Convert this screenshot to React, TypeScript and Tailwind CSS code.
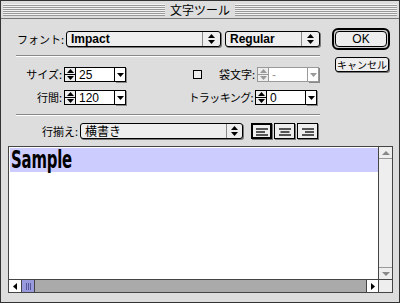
import type { ReactNode } from 'react'

const jp = "font-['Noto_Sans_CJK_JP',sans-serif]"
const latin = "font-['Liberation_Sans','Noto_Sans_CJK_JP',sans-serif]"

function Stepper({ disabled }: { disabled?: boolean }) {
  const c = disabled ? '#999' : '#000'
  return (
    <div className={`w-[12px] h-[15px] border ${disabled ? 'border-[#999]' : 'border-black'} bg-[#eee] flex flex-col`}>
      <div className={`flex-1 flex items-center justify-center border-b ${disabled ? 'border-[#999]' : 'border-black'}`}>
        <svg width="7" height="4" viewBox="0 0 7 4"><path d="M0 4 L3.5 0 L7 4 Z" fill={c} /></svg>
      </div>
      <div className="flex-1 flex items-center justify-center">
        <svg width="7" height="4" viewBox="0 0 7 4"><path d="M0 0 L3.5 4 L7 0 Z" fill={c} /></svg>
      </div>
    </div>
  )
}

function SpinField({ value, fieldW, disabled }: { value: string; fieldW: string; disabled?: boolean }) {
  const bc = disabled ? 'border-[#999]' : 'border-black'
  return (
    <div className="flex items-center">
      <Stepper disabled={disabled} />
      <div className={`h-[15px] ${fieldW} border border-l-0 ${bc} bg-white flex items-center pl-[3px] text-[12px] leading-none ${latin} ${disabled ? 'text-[#999]' : 'text-black'}`}>
        {value}
      </div>
      <div className={`w-[11px] h-[15px] border border-l-0 ${bc} bg-white flex items-center justify-center shadow-[1px_1px_0_#888]`}>
        <svg width="7" height="4" viewBox="0 0 7 4"><path d="M0 0 L3.5 4 L7 0 Z" fill={disabled ? '#999' : '#000'} /></svg>
      </div>
    </div>
  )
}

function Popup({ label, w, bold, arrowW = 'w-[17px]' }: { label: string; w: string; bold?: boolean; arrowW?: string }) {
  return (
    <div className={`${w} h-[16px] border border-black rounded-[3px] bg-[#eee] shadow-[1px_1px_0_#777] flex items-stretch`}>
      <div className={`flex-1 flex items-center pl-[4px] text-[12px] leading-none ${bold ? `font-bold ${latin}` : jp}`}>{label}</div>
      <div className={`${arrowW} border-l border-[#888] flex items-center justify-center`}>
        <svg width="7" height="10" viewBox="0 0 7 10">
          <path d="M0 4 L3.5 0 L7 4 Z M0 6 L3.5 10 L7 6 Z" fill="#000" />
        </svg>
      </div>
    </div>
  )
}

function Sep() {
  return <div className="h-[2px] w-[304px] border-t border-[#888] border-b border-b-white" />
}

function Label({ children, w }: { children: ReactNode; w: string }) {
  return (
    <div className={`${w} shrink-0 flex items-center justify-end whitespace-nowrap text-[11px] leading-none pr-[2px] ${jp}`}>
      {children}
    </div>
  )
}

function AlignBtn({ kind, active }: { kind: 'l' | 'c' | 'r'; active?: boolean }) {
  const lines = [
    { y: 3, w: 12 },
    { y: 6, w: 9 },
    { y: 9, w: 12 },
  ]
  return (
    <div className={`w-[21px] h-[16px] ${active ? 'border-2' : 'border'} border-black bg-[#eee] shadow-[1px_1px_0_#777] flex items-center justify-center`}>
      <svg width="14" height="12" viewBox="0 0 14 12">
        {lines.map((l, i) => {
          const x = kind === 'l' ? 1 : kind === 'r' ? 13 - l.w : (14 - l.w) / 2
          return <rect key={i} x={x} y={l.y} width={l.w} height="2" fill="#555" />
        })}
      </svg>
    </div>
  )
}

export default function App() {
  return (
    <div className="w-[400px] h-[303px] bg-[#dddddd] border border-[#333] flex flex-col text-black">
      {/* title bar */}
      <div className="h-[18px] bg-[#dddddd] border-b border-[#777] flex items-center px-[2px] gap-0">
        <div className="flex-1 h-[12px] bg-[repeating-linear-gradient(to_bottom,#f2f2f2_0px,#f2f2f2_1px,#999_1px,#999_2px)]" />
        <div className={`px-[5px] text-[12px] leading-none ${jp}`}>文字ツール</div>
        <div className="flex-1 h-[12px] bg-[repeating-linear-gradient(to_bottom,#f2f2f2_0px,#f2f2f2_1px,#999_1px,#999_2px)]" />
      </div>

      <div className="flex-1 flex flex-col pl-[7px] pr-[6px]">
        <div className="flex pt-[9px] pl-[8px]">
          {/* left controls */}
          <div className="w-[305px] pt-[3px] flex flex-col">
            <div className="flex items-center h-[16px]">
              <Label w="w-[50px]">フォント:</Label>
              <Popup label="Impact" w="w-[155px]" bold arrowW="w-[18px]" />
              <div className="w-[4px]" />
              <Popup label="Regular" w="w-[95px]" bold arrowW="w-[18px]" />
            </div>
            <div className="mt-[8px]"><Sep /></div>

            <div className="flex items-center h-[15px] mt-[10px]">
              <Label w="w-[48px]">サイズ:</Label>
              <SpinField value="25" fieldW="w-[39px]" />
              <div className="w-[60px]" />
              <div className="w-[71px] shrink-0 flex items-center">
                <div className="ml-[7px] w-[9px] h-[9px] border border-black bg-[#eee]" />
                <div className="flex-1 flex justify-end"><Label w="w-auto">袋文字:</Label></div>
              </div>
              <SpinField value="-" fieldW="w-[39px]" disabled />
            </div>

            <div className="flex items-center h-[15px] mt-[8px]">
              <Label w="w-[48px]">行間:</Label>
              <SpinField value="120" fieldW="w-[39px]" />
              <div className="w-[60px] shrink-0" />
              <Label w="w-[69px]"><span className="tracking-[-0.6px]">トラッキング:</span></Label>
              <SpinField value="0" fieldW="w-[39px]" />
            </div>
            <div className="mt-[9px]"><Sep /></div>

            <div className="flex items-center h-[16px] mt-[7px]">
              <Label w="w-[64px]">行揃え:</Label>
              <Popup label="横書き" w="w-[163px]" arrowW="w-[16px]" />
              <div className="w-[8px]" />
              <div className="flex gap-[2px]">
                <AlignBtn kind="l" active />
                <AlignBtn kind="c" />
                <AlignBtn kind="r" />
              </div>
            </div>
          </div>

          {/* right buttons */}
          <div className="ml-[11px] flex flex-col items-start">
            <div className="w-[58px] h-[22px] border-2 border-black rounded-[6px] p-[1px] bg-[#ccc]">
              <div className={`h-full border border-black rounded-[4px] bg-[#eee] flex items-center justify-center text-[12px] leading-none ${latin}`}>OK</div>
            </div>
            <div className={`mt-[7px] ml-[3px] w-[54px] h-[15px] border border-black rounded-[3px] bg-[#eee] shadow-[1px_1px_0_#777] flex items-center justify-center whitespace-nowrap text-[10px] leading-none ${jp}`}>
              キャンセル
            </div>
          </div>
        </div>

        {/* text area */}
        <div className="mt-[7px] h-[147px] border border-[#444] bg-white flex flex-col">
          <div className="flex-1 flex min-h-0">
            <div className="flex-1 pt-[1px] pl-[1px]">
              <div className="h-[24px] bg-[#ccccff] flex items-center pl-[1px]">
                <span className="inline-block origin-left scale-x-[0.62] font-['DejaVu_Sans',sans-serif] font-bold text-[24px] leading-[22px] tracking-[-0.3px]">Sample</span>
              </div>
            </div>
            <div className="w-[14px] border-l border-[#444] bg-[#eeeeee] flex flex-col justify-between">
              <div className="h-[12px] border-b border-[#999] flex items-center justify-center">
                <svg width="8" height="4" viewBox="0 0 8 4"><path d="M0 4 L4 0 L8 4 Z" fill="#888" /></svg>
              </div>
              <div className="h-[12px] border-t border-[#999] flex items-center justify-center">
                <svg width="8" height="4" viewBox="0 0 8 4"><path d="M0 0 L4 4 L8 0 Z" fill="#888" /></svg>
              </div>
            </div>
          </div>
          <div className="h-[13px] border-t border-[#444] flex">
            <div className="w-[13px] bg-white border-r border-[#444] flex items-center justify-center">
              <svg width="4" height="7" viewBox="0 0 4 7"><path d="M4 0 L0 3.5 L4 7 Z" fill="#000" /></svg>
            </div>
            <div className="w-[13px] bg-[#9999dd] border-r border-[#444] flex items-center justify-center gap-[1px]">
              <div className="w-[1px] h-[7px] bg-[#555599]" />
              <div className="w-[1px] h-[7px] bg-[#555599]" />
              <div className="w-[1px] h-[7px] bg-[#555599]" />
            </div>
            <div className="flex-1 bg-[#aaaaaa]" />
            <div className="w-[12px] bg-white border-l border-[#444] flex items-center justify-center">
              <svg width="4" height="7" viewBox="0 0 4 7"><path d="M0 0 L4 3.5 L0 7 Z" fill="#000" /></svg>
            </div>
            <div className="w-[14px] bg-[#eeeeee] border-l border-[#444]" />
          </div>
        </div>
      </div>
    </div>
  )
}
